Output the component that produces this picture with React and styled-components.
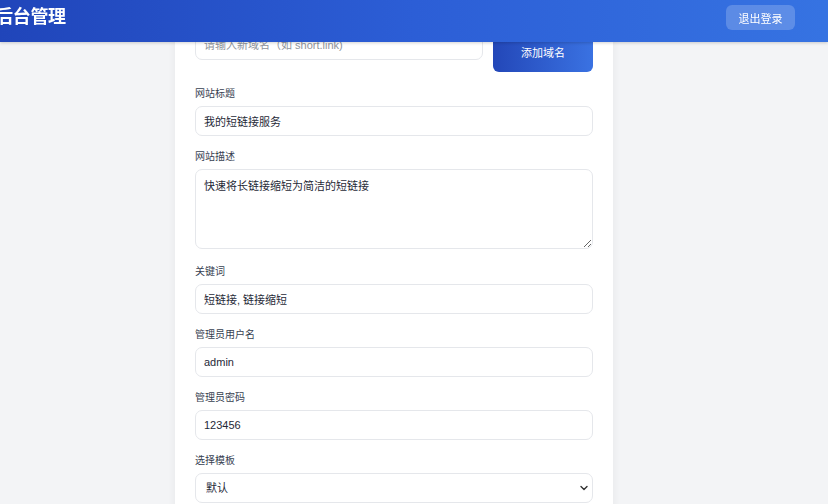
import React from "react";
import styled, { createGlobalStyle } from "styled-components";

const Global = createGlobalStyle`
  html, body { margin: 0; padding: 0; }
  body {
    background: #f3f4f6;
    font-family: "Liberation Sans", "Noto Sans CJK SC", sans-serif;
    color: #1f2937;
  }
  * { box-sizing: border-box; }
`;

const Header = styled.header`
  position: fixed;
  top: 0;
  left: 0;
  right: 0;
  height: 42px;
  z-index: 10;
  display: flex;
  align-items: flex-start;
  justify-content: space-between;
  padding: 5px 33px 0 0;
  background: linear-gradient(90deg, #2045ba 0%, #2c5ed6 50%, #3673e2 100%);
  box-shadow: 0 1px 3px rgba(0, 0, 0, 0.18);
`;

const Title = styled.h1`
  margin: 0 0 0 -5px;
  font-size: 18px;
  line-height: 25px;
  font-weight: 700;
  color: #fff;
  letter-spacing: -0.3px;
`;

const LogoutButton = styled.button`
  width: 69px;
  height: 25px;
  border: none;
  border-radius: 6px;
  background: rgba(255, 255, 255, 0.2);
  color: #fff;
  font-family: inherit;
  font-size: 11px;
  cursor: pointer;
`;

const Page = styled.main`
  display: grid;
  grid-template-columns: 175px 438px 1fr;
  padding-top: 10px;
`;

const Card = styled.section`
  grid-column: 2;
  background: #fff;
  border-radius: 8px;
  padding: 20px 20px 40px;
  box-shadow: 0 2px 8px rgba(0, 0, 0, 0.06);
`;

const DomainRow = styled.div`
  display: flex;
  gap: 10px;
  align-items: flex-start;
  margin-bottom: 15px;
`;

const Field = styled.div`
  margin-bottom: ${(p) => p.$mb || 14}px;
`;

const Label = styled.label`
  display: block;
  font-size: 10px;
  line-height: 14px;
  color: #374151;
  margin-bottom: 5px;
`;

const Input = styled.input`
  display: block;
  width: 100%;
  height: 30px;
  padding: 0 8px;
  border: 1px solid #e5e7eb;
  border-radius: 7px;
  background: #fff;
  font-family: inherit;
  font-size: 11px;
  color: #1f2937;
  outline: none;
  flex: ${(p) => (p.$grow ? 1 : "none")};
  &::placeholder { color: #8f949c; }
`;

const AddButton = styled.button`
  flex: none;
  width: 100px;
  height: 42px;
  border: none;
  border-radius: 6px;
  background: linear-gradient(90deg, #2347b8 0%, #3a72e2 100%);
  color: #fff;
  font-family: inherit;
  font-size: 11px;
  padding-top: 2px;
  cursor: pointer;
`;

const TextArea = styled.textarea`
  display: block;
  width: 100%;
  height: 80px;
  padding: 8px 8px;
  border: 1px solid #e5e7eb;
  border-radius: 7px;
  font-family: inherit;
  font-size: 11px;
  line-height: 16px;
  color: #1f2937;
  outline: none;
`;

const SelectWrap = styled.div`
  position: relative;
`;

const Select = styled.select`
  display: block;
  width: 100%;
  height: 30px;
  padding: 0 10px;
  border: 1px solid #e5e7eb;
  border-radius: 7px;
  background: #fff;
  font-family: inherit;
  font-size: 11px;
  color: #1f2937;
  appearance: none;
  outline: none;
`;

const Chevron = styled.svg`
  position: absolute;
  right: 5px;
  top: 12px;
  pointer-events: none;
`;

export default function App() {
  return (
    <>
      <Global />
      <Header>
        <Title>后台管理</Title>
        <LogoutButton>退出登录</LogoutButton>
      </Header>
      <Page>
        <Card>
          <DomainRow>
            <Input $grow placeholder="请输入新域名（如 short.link)" />
            <AddButton>添加域名</AddButton>
          </DomainRow>
          <Field>
            <Label>网站标题</Label>
            <Input defaultValue="我的短链接服务" />
          </Field>
          <Field $mb={16}>
            <Label>网站描述</Label>
            <TextArea defaultValue="快速将长链接缩短为简洁的短链接" />
          </Field>
          <Field>
            <Label>关键词</Label>
            <Input defaultValue="短链接, 链接缩短" />
          </Field>
          <Field>
            <Label>管理员用户名</Label>
            <Input defaultValue="admin" />
          </Field>
          <Field>
            <Label>管理员密码</Label>
            <Input defaultValue="123456" />
          </Field>
          <Field>
            <Label>选择模板</Label>
            <SelectWrap>
              <Select defaultValue="default">
                <option value="default">默认</option>
              </Select>
              <Chevron width="8" height="6" viewBox="0 0 8 6">
                <path d="M1 1.5 L4 4.5 L7 1.5" fill="none" stroke="#333" strokeWidth="1.4" strokeLinecap="round" strokeLinejoin="round" />
              </Chevron>
            </SelectWrap>
          </Field>
        </Card>
      </Page>
    </>
  );
}
